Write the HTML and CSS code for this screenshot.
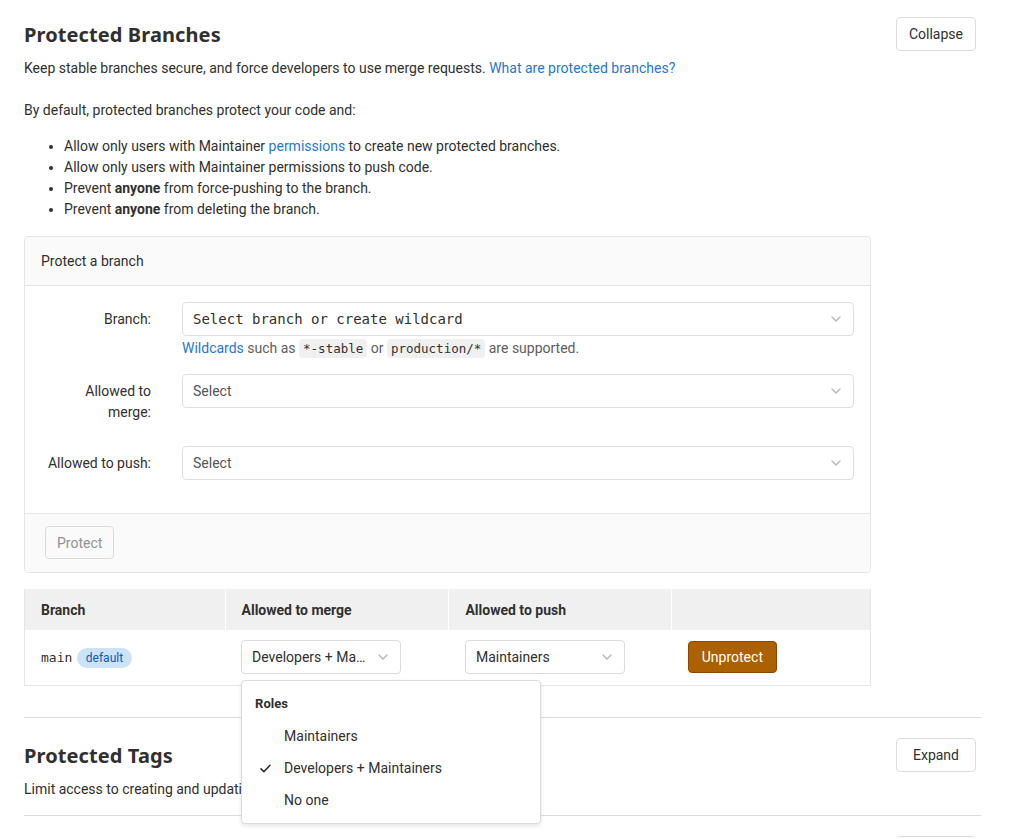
FILE: index.html
```html
<!DOCTYPE html>
<html lang="en">
<head>
<meta charset="utf-8">
<title>Repository settings</title>
<link rel="stylesheet" href="styles.css">
</head>
<body>
<main class="page">

  <section class="settings settings-first">
    <div class="settings-header">
      <div class="settings-intro">
        <h4 class="settings-title">Protected Branches</h4>
        <p class="settings-desc">Keep stable branches secure, and force developers to use merge requests. <a href="#">What are protected branches?</a></p>
      </div>
      <button class="btn btn-toggle" type="button">Collapse</button>
    </div>

    <div class="settings-content">
      <p class="lead-text">By default, protected branches protect your code and:</p>
      <ul class="rules">
        <li>Allow only users with Maintainer <a href="#">permissions</a> to create new protected branches.</li>
        <li>Allow only users with Maintainer permissions to push code.</li>
        <li>Prevent <strong>anyone</strong> from force-pushing to the branch.</li>
        <li>Prevent <strong>anyone</strong> from deleting the branch.</li>
      </ul>

      <form class="card">
        <div class="card-header">Protect a branch</div>
        <div class="card-body">
          <div class="form-group">
            <label class="form-label">Branch:</label>
            <div class="form-field">
              <div class="select select-mono">
                <span>Select branch or create wildcard</span>
                <svg class="chevron" viewBox="0 0 10 6" width="10" height="6"><polyline points="1,1 5,5 9,1"/></svg>
              </div>
              <p class="help"><a href="#">Wildcards</a> such as <code>*-stable</code> or <code>production/*</code> are supported.</p>
            </div>
          </div>
          <div class="form-group">
            <label class="form-label">Allowed to merge:</label>
            <div class="form-field">
              <div class="select">
                <span>Select</span>
                <svg class="chevron" viewBox="0 0 10 6" width="10" height="6"><polyline points="1,1 5,5 9,1"/></svg>
              </div>
            </div>
          </div>
          <div class="form-group">
            <label class="form-label">Allowed to push:</label>
            <div class="form-field">
              <div class="select">
                <span>Select</span>
                <svg class="chevron" viewBox="0 0 10 6" width="10" height="6"><polyline points="1,1 5,5 9,1"/></svg>
              </div>
            </div>
          </div>
        </div>
        <div class="card-footer">
          <button class="btn btn-disabled" type="button" disabled>Protect</button>
        </div>
      </form>

      <table class="branches">
        <colgroup>
          <col class="col-branch">
          <col class="col-merge">
          <col class="col-push">
          <col class="col-actions">
        </colgroup>
        <thead>
          <tr>
            <th>Branch</th>
            <th>Allowed to merge</th>
            <th>Allowed to push</th>
            <th></th>
          </tr>
        </thead>
        <tbody>
          <tr>
            <td><span class="ref-name">main</span> <span class="badge">default</span></td>
            <td>
              <div class="dropdown">
                <button class="dropdown-toggle" type="button">
                  <span class="toggle-text">Developers + Ma…</span>
                  <svg class="chevron" viewBox="0 0 10 6" width="10" height="6"><polyline points="1,1 5,5 9,1"/></svg>
                </button>
                <div class="dropdown-menu">
                  <div class="dropdown-header">Roles</div>
                  <ul class="dropdown-list">
                    <li class="dropdown-item">Maintainers</li>
                    <li class="dropdown-item is-checked">
                      <svg class="check" viewBox="0 0 16 16" width="13" height="13"><path d="M2.5 8.5l3.5 3.5 7.5-8"/></svg>
                      Developers + Maintainers
                    </li>
                    <li class="dropdown-item">No one</li>
                  </ul>
                </div>
              </div>
            </td>
            <td>
              <button class="dropdown-toggle" type="button">
                <span class="toggle-text">Maintainers</span>
                <svg class="chevron" viewBox="0 0 10 6" width="10" height="6"><polyline points="1,1 5,5 9,1"/></svg>
              </button>
            </td>
            <td><button class="btn btn-warning" type="button">Unprotect</button></td>
          </tr>
        </tbody>
      </table>
    </div>
  </section>

  <section class="settings">
    <div class="settings-header">
      <div class="settings-intro">
        <h4 class="settings-title">Protected Tags</h4>
        <p class="settings-desc">Limit access to creating and updating protected tags.</p>
      </div>
      <button class="btn btn-toggle" type="button">Expand</button>
    </div>
  </section>

  <section class="settings">
    <div class="settings-header">
      <div class="settings-intro">
        <h4 class="settings-title">Deploy Keys</h4>
        <p class="settings-desc">Add deploy keys to grant read/write access to this repository.</p>
      </div>
      <button class="btn btn-toggle" type="button">Expand</button>
    </div>
  </section>

</main>
</body>
</html>
```

FILE: styles.css
```css
* {
  box-sizing: border-box;
}

html,
body {
  margin: 0;
  background: #fff;
}

body {
  font-family: Roboto, "Noto Sans", sans-serif;
  font-size: 14px;
  line-height: 20px;
  color: #303030;
}

a {
  color: #1f78d1;
  text-decoration: none;
}

p {
  margin: 0;
}

.page {
  padding: 0 28px 0 24px;
}

/* ---------- settings sections ---------- */

.settings {
  border-top: 1px solid #dbdbdb;
  padding: 20px 0 16px;
}

.settings-first {
  border-top: 0;
  padding-top: 17px;
  padding-bottom: 31px;
}

.settings-header {
  display: flex;
  align-items: flex-start;
  justify-content: space-between;
}

.settings-title {
  margin: 6px 0 11px;
  font-family: "Noto Sans", Roboto, sans-serif;
  font-size: 20px;
  line-height: 24px;
  font-weight: 700;
  letter-spacing: 0.1px;
  color: #303030;
}

.settings-desc {
  line-height: 20px;
}

.btn {
  font-family: inherit;
  font-size: 14px;
  line-height: 20px;
  border-radius: 4px;
  border: 1px solid #dbdbdb;
  background: #fff;
  color: #303030;
  padding: 6px 12px;
  cursor: pointer;
}

.btn-toggle {
  min-width: 80px;
  height: 34px;
  margin-right: 5px;
  flex-shrink: 0;
}

.settings-content {
  padding-top: 22px;
  max-width: 847px;
}

.lead-text {
  margin-bottom: 16px;
}

.rules {
  margin: 0 0 16px;
  padding-left: 40px;
  line-height: 21px;
}

.rules strong {
  font-weight: 700;
}

/* ---------- protect form card ---------- */

.card {
  border: 1px solid #e5e5e5;
  border-radius: 4px;
  margin-bottom: 16px;
}

.card-header {
  background: #fafafa;
  border-bottom: 1px solid #e5e5e5;
  padding: 14px 16px;
  line-height: 20px;
  border-radius: 4px 4px 0 0;
}

.card-body {
  padding: 16px 16px 16px;
}

.form-group {
  display: grid;
  grid-template-columns: 110px 1fr;
  column-gap: 31px;
  margin-bottom: 16px;
}

.form-label {
  text-align: right;
  padding: 7px 0;
  line-height: 21px;
}

.select {
  height: 34px;
  border: 1px solid #dfdfdf;
  border-radius: 4px;
  display: flex;
  align-items: center;
  justify-content: space-between;
  padding: 0 12px 0 10px;
  color: #555;
}

.select-mono {
  font-family: "DejaVu Sans Mono", monospace;
  font-size: 14px;
  color: #303030;
}

.chevron {
  fill: none;
  stroke: #b5b5b5;
  stroke-width: 1.3;
  stroke-linecap: round;
  stroke-linejoin: round;
}

.help {
  margin-top: 2px;
  height: 20px;
  color: #5e5e5e;
  line-height: 20px;
}

code {
  font-family: "DejaVu Sans Mono", monospace;
  font-size: 12.5px;
  line-height: 1;
  background: #f0f0f0;
  color: #303030;
  border-radius: 4px;
  padding: 2px 4px;
}

.card-footer {
  background: #fafafa;
  border-top: 1px solid #e5e5e5;
  padding: 12px 20px 13px;
  border-radius: 0 0 4px 4px;
}

.btn-disabled {
  color: #919191;
  background: #fafafa;
  border-color: #dbdbdb;
  padding: 6px 11px;
  height: 33px;
  cursor: default;
}

/* ---------- protected branches table ---------- */

.branches {
  width: 847px;
  border-collapse: collapse;
  border: 1px solid #e5e5e5;
  border-top: 0;
}

.col-branch { width: 201px; }
.col-merge { width: 224px; }
.col-push { width: 223px; }
.col-actions { width: 199px; }

.branches th {
  background: #f0f0f0;
  text-align: left;
  font-weight: 700;
  height: 41px;
  padding: 0 16px;
  border-left: 1px solid #fff;
}

.branches th:first-child {
  border-left: 0;
}

.branches td {
  height: 55px;
  padding: 0 16px;
  vertical-align: middle;
  border-bottom: 1px solid #e5e5e5;
}

.ref-name {
  font-family: "DejaVu Sans Mono", monospace;
  font-size: 13px;
}

.badge {
  display: inline-block;
  background: #cbe2f9;
  color: #0b5cad;
  font-size: 12px;
  line-height: 20px;
  padding: 0 9px;
  border-radius: 10px;
  margin-left: 1px;
}

.dropdown {
  position: relative;
  display: inline-block;
}

.dropdown-toggle {
  width: 160px;
  height: 34px;
  border: 1px solid #dbdbdb;
  border-radius: 4px;
  background: #fff;
  font-family: inherit;
  font-size: 14px;
  color: #303030;
  display: flex;
  align-items: center;
  justify-content: space-between;
  padding: 0 12px 0 10px;
}

.dropdown-menu {
  position: absolute;
  top: 40px;
  left: 0;
  width: 300px;
  background: #fff;
  border: 1px solid #dbdbdb;
  border-radius: 4px;
  box-shadow: 0 2px 4px rgba(0, 0, 0, 0.1);
  padding: 7px 0;
  z-index: 10;
}

.dropdown-header {
  font-size: 13px;
  font-weight: 700;
  line-height: 32px;
  padding: 0 13px;
}

.dropdown-list {
  list-style: none;
  margin: 0;
  padding: 0;
}

.dropdown-item {
  position: relative;
  line-height: 32px;
  padding: 0 12px 0 42px;
}

.check {
  position: absolute;
  left: 17px;
  top: 10px;
  fill: none;
  stroke: #303030;
  stroke-width: 2;
  stroke-linecap: round;
  stroke-linejoin: round;
}

.btn-warning {
  background: #ab6100;
  border-color: #8f4700;
  color: #fff;
  height: 32px;
  padding: 0 13px;
}
```
